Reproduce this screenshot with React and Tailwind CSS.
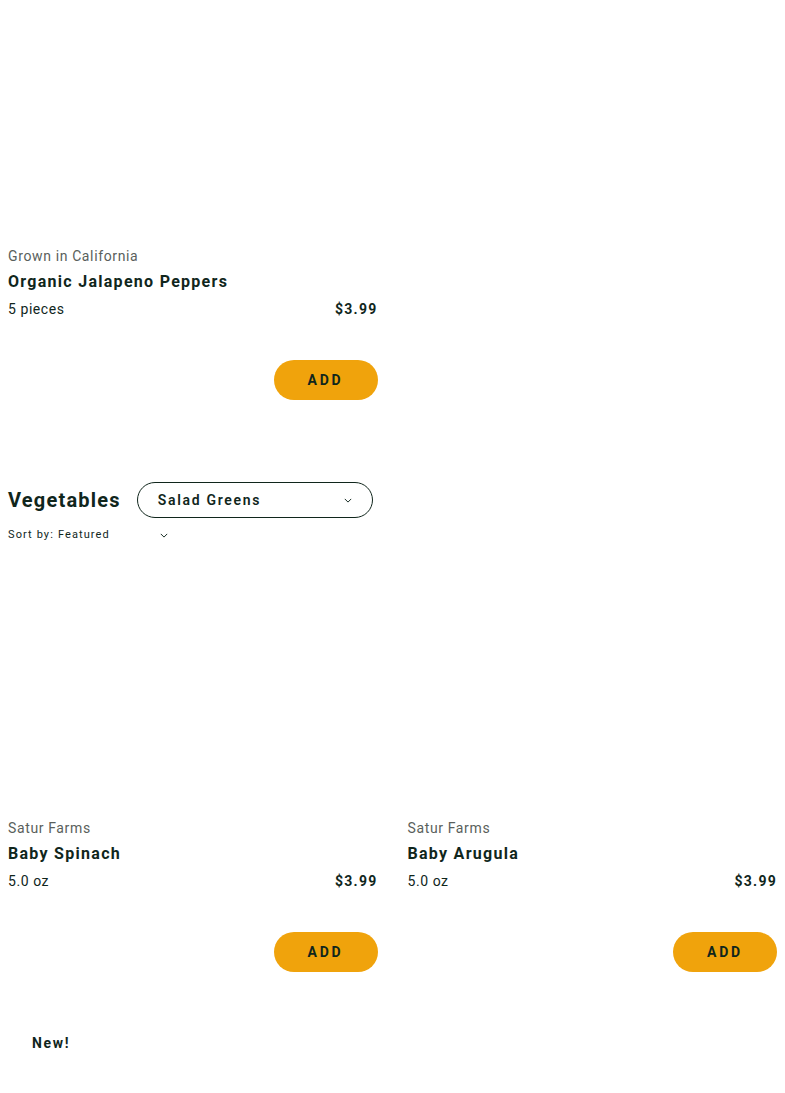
const products = [
  { brand: 'Satur Farms', name: 'Baby Spinach', size: '5.0 oz', price: '$3.99' },
  { brand: 'Satur Farms', name: 'Baby Arugula', size: '5.0 oz', price: '$3.99' },
];

function ProductCard({ brand, name, size, price, imageClass }) {
  return (
    <div className="flex flex-col">
      <div className={imageClass} />
      <div className="text-[14px] leading-5 text-[#5a5f5c] tracking-[0.045em]">{brand}</div>
      <div className="mt-1 text-[16px] leading-6 font-bold text-[#10261c] tracking-[0.08em]">{name}</div>
      <div className="mt-[5px] flex items-center justify-between text-[14px] leading-5 text-[#10261c]">
        <span className="tracking-[0.04em]">{size}</span>
        <span className="font-bold tracking-[0.09em]">{price}</span>
      </div>
      <div className="mt-[41px] flex justify-end">
        <button className="w-[104px] h-10 rounded-full bg-[#f0a30c] text-[14px] font-bold tracking-[0.2em] text-[#10261c]">
          ADD
        </button>
      </div>
    </div>
  );
}

function Chevron({ className }) {
  return (
    <svg viewBox="0 0 10 6" className={className} fill="none" stroke="currentColor" strokeWidth="1.2">
      <path d="M1 1l4 4 4-4" />
    </svg>
  );
}

export default function App() {
  return (
    <div className="bg-white min-h-[1093px] px-2 text-[#10261c]" style={{ fontFamily: 'Roboto, "Liberation Sans", sans-serif' }}>
      <div className="grid grid-cols-2 gap-x-[30px]">
        <ProductCard brand="Grown in California" name="Organic Jalapeno Peppers" size="5 pieces" price="$3.99" imageClass="h-[246px]" />
        <div />
      </div>

      <div className="mt-[82px] flex items-center gap-4">
        <h2 className="text-[20px] font-bold tracking-[0.06em]">Vegetables</h2>
        <button className="w-[236px] h-9 rounded-full border border-[#10261c] flex items-center justify-between pl-5 pr-5">
          <span className="text-[14px] font-semibold tracking-[0.12em]">Salad Greens</span>
          <Chevron className="w-2 h-[5px]" />
        </button>
      </div>
      <div className="mt-[9px] flex items-center text-[11px] leading-4 tracking-[0.1em]">
        <span>Sort by:</span>
        <span className="ml-[4px]">Featured</span>
        <Chevron className="ml-[50px] w-2 h-[5px]" />
      </div>

      <div className="grid grid-cols-2 gap-x-[30px]">
        {products.map((p) => (
          <ProductCard key={p.name} {...p} imageClass="h-[275px]" />
        ))}
      </div>

      <div className="mt-[61px] pl-6 text-[14px] font-bold tracking-[0.12em] leading-5">New!</div>
    </div>
  );
}
